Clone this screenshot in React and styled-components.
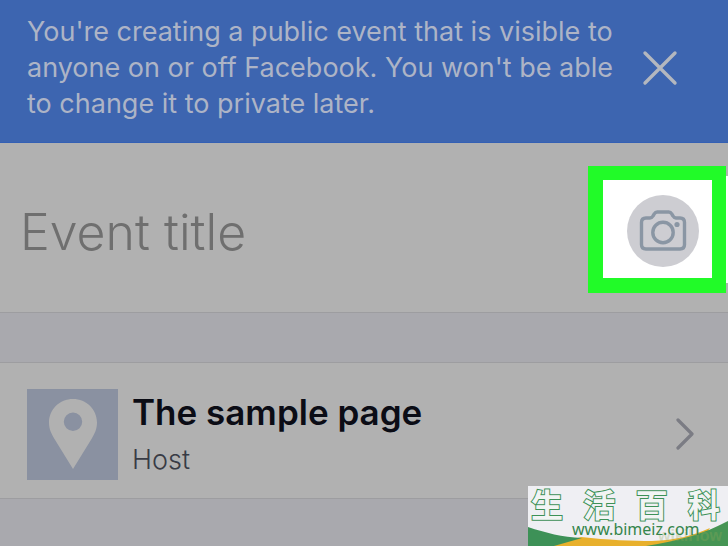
import { useState } from "react";
import styled, { createGlobalStyle } from "styled-components";

const GlobalStyle = createGlobalStyle`
  * {
    box-sizing: border-box;
  }
  body {
    margin: 0;
    background-color: #a9a9ae;
    font-family: Inter, "Liberation Sans", sans-serif;
  }
`;
const Page = styled.div`
  position: relative;
  min-height: 100vh;
  background-color: #a9a9ae;
`;
const Banner = styled.header`
  display: flex;
  align-items: center;
  justify-content: space-between;
  padding: 14px 50px 20px 27px;
  background-color: #3d65b0;
  border-bottom: 1px solid #3460b4;
`;
const BannerText = styled.p`
  margin: 0;
  max-width: 600px;
  font-size: 27px;
  line-height: 36px;
  color: #adb4c6;
`;
const IconButton = styled.button`
  display: flex;
  padding: 0;
  border: none;
  background: none;
  cursor: pointer;
`;
const TitleSection = styled.section`
  display: flex;
  align-items: center;
  justify-content: space-between;
  padding: 23px 2px 19px 20px;
  background-color: #b1b1b1;
  border-bottom: 1px solid #9d9da0;
`;
const TitleInput = styled.input`
  flex: 1;
  min-width: 0;
  padding: 4px 0 0;
  border: none;
  outline: none;
  background: none;
  font-family: inherit;
  font-size: 50px;
  font-weight: 300;
  color: #4c4c4c;

  &::placeholder {
    color: #6f6f6f;
    opacity: 1;
  }
`;
const Highlight = styled.div`
  padding: 15px 13px 11px 24px;
  border: solid #21fb28;
  border-width: 14px 14px 15px 15px;
  background-color: white;
  box-shadow: 12px 0 0 -10px white;
`;
const CameraButton = styled(IconButton)`
  align-items: center;
  justify-content: center;
  width: 72px;
  height: 72px;
  border-radius: 50%;
  background-color: #cdcdd2;
`;
const HostRow = styled.a`
  display: flex;
  align-items: center;
  gap: 14px;
  margin-top: 49px;
  padding: 23px 34px 16px 27px;
  background-color: #b1b1b1;
  border-top: 1px solid #9d9da0;
  border-bottom: 1px solid #9d9da0;
  text-decoration: none;
`;
const Thumbnail = styled.div`
  display: flex;
  align-items: center;
  justify-content: center;
  width: 91px;
  height: 91px;
  background-color: #8a91a1;
`;
const HostInfo = styled.div`
  flex: 1;
`;
const HostName = styled.h2`
  margin: 0;
  font-size: 35px;
  font-weight: 600;
  line-height: 52px;
  color: #0b0c15;
`;
const HostRole = styled.p`
  margin: 0;
  font-size: 27px;
  font-weight: 300;
  line-height: 44px;
  color: #383b45;
`;
const Watermark = styled.footer`
  position: absolute;
  right: 0;
  bottom: 0;
  width: 200px;
  height: 60px;
  background-color: #efeff3;
`;
const Swoosh = styled.svg`
  position: absolute;
  left: 0;
  bottom: 0;
`;
const SiteName = styled.div`
  position: relative;
  display: flex;
  justify-content: space-between;
  padding: 0 8px 0 3px;
  font-family: "Noto Sans CJK SC", sans-serif;
  font-size: 32px;
  font-weight: 700;
  line-height: 34px;
  color: #f2f4f4;
  -webkit-text-stroke: 2px #3d9157;
  paint-order: stroke fill;
`;
const SiteLink = styled.a`
  position: relative;
  display: block;
  padding-left: 44px;
  font-family: "Noto Sans", sans-serif;
  font-size: 16px;
  line-height: 18px;
  color: #35854b;
  text-decoration: none;
`;
const Credit = styled.span`
  position: absolute;
  right: 6px;
  bottom: 0;
  font-family: "Liberation Sans", sans-serif;
  font-size: 16px;
  font-weight: 700;
  line-height: 20px;
  color: rgba(150, 170, 90, 0.3);
`;

const CloseIcon = () => (
  <svg width="36" height="36" viewBox="0 0 36 36" fill="none">
    <path
      d="M3 3L33 33M33 3L3 33"
      stroke="#b3b7bf"
      strokeWidth="3.4"
      strokeLinecap="round"
    />
  </svg>
);

const CameraIcon = () => (
  <svg width="48" height="44" viewBox="0 0 48 44" fill="none">
    <path
      d="M7 9H11C12.5 9 13.2 8.4 14 7L15.4 4.7C16.1 3.4 17 3 18.3 3H29.7C31 3 31.9 3.4 32.6 4.7L34 7C34.8 8.4 35.5 9 37 9H41C44 9 45.5 10.6 45.5 13.5V35.5C45.5 38.5 44 40 41 40H7C4 40 2.5 38.5 2.5 35.5V13.5C2.5 10.6 4 9 7 9Z"
      stroke="#8a96a4"
      strokeWidth="3.4"
      strokeLinejoin="round"
    />
    <circle cx="24" cy="23.5" r="10.2" stroke="#8a96a4" strokeWidth="3.4" />
    <circle cx="38" cy="15.5" r="2.6" fill="#8a96a4" />
  </svg>
);

const PinIcon = () => (
  <svg width="48" height="70" viewBox="0 0 48 70">
    <path
      d="M24 0C10.7 0 0 10.3 0 23.5C0 30 2.3 34.500 5.500 40L24 70L42.500 40C45.700 34.500 48 30 48 23.500C48 10.300 37.300 0 24 0ZM24 13.500A9.200 9.200 0 1 1 24 31.900A9.200 9.200 0 1 1 24 13.500Z"
      fill="#b1b1b1"
      fillRule="evenodd"
    />
  </svg>
);

const ChevronIcon = () => (
  <svg width="18" height="32" viewBox="0 0 18 32" fill="none">
    <path
      d="M2 2L16 16L2 30"
      stroke="#7b7c84"
      strokeWidth="3.2"
      strokeLinecap="round"
      strokeLinejoin="round"
    />
  </svg>
);

const App = () => {
  const [title, setTitle] = useState("");
  const [open, setOpen] = useState(true);

  return (
    <Page>
      <GlobalStyle />
      {open && (
        <Banner>
          <BannerText>
            You're creating a public event that is visible to anyone on or off
            Facebook. You won't be able to change it to private later.
          </BannerText>
          <IconButton aria-label="Close" onClick={() => setOpen(false)}>
            <CloseIcon />
          </IconButton>
        </Banner>
      )}
      <TitleSection>
        <TitleInput
          aria-label="Event title"
          placeholder="Event title"
          value={title}
          onChange={(e) => setTitle(e.target.value)}
        />
        <Highlight>
          <CameraButton aria-label="Add photo">
            <CameraIcon />
          </CameraButton>
        </Highlight>
      </TitleSection>
      <HostRow href="#host">
        <Thumbnail>
          <PinIcon />
        </Thumbnail>
        <HostInfo>
          <HostName>The sample page</HostName>
          <HostRole>Host</HostRole>
        </HostInfo>
        <ChevronIcon />
      </HostRow>
      <Watermark>
        <Swoosh width="200" height="60" viewBox="0 0 200 60">
          <path
            d="M24 60L53 51C80 54 104 55 124 55C148 54 164 50 182 42L170 60Z"
            fill="#e8b02c"
          />
          <path d="M0 41C18 47 34 51 54 52L26 60H0Z" fill="#3d9157" />
          <path d="M118 60C150 55 176 48 200 35V60Z" fill="#469554" />
        </Swoosh>
        <Credit>wikiHow</Credit>
        <SiteName>
          <span>生</span>
          <span>活</span>
          <span>百</span>
          <span>科</span>
        </SiteName>
        <SiteLink href="#site">www.bimeiz.com</SiteLink>
      </Watermark>
    </Page>
  );
};

export default App;
